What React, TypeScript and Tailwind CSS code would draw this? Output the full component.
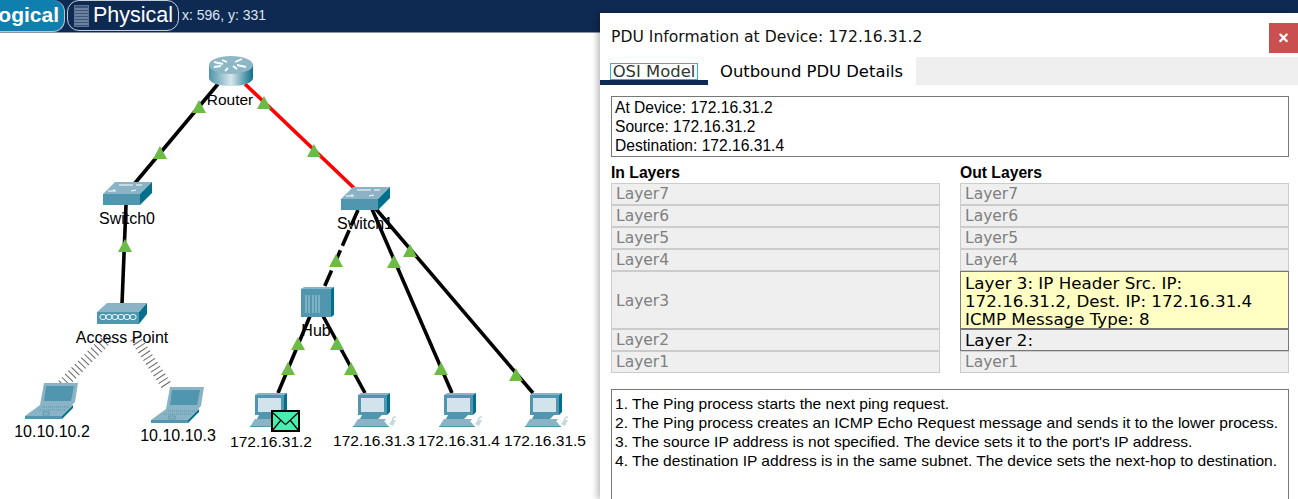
const ARIAL = "font-['Liberation_Sans',Arial,sans-serif]";
const TAHOMA = "font-['DejaVu_Sans',Verdana,sans-serif]";

function Defs() {
  return (
    <defs>
      <linearGradient id="routerSide" x1="0" x2="1" y1="0" y2="0">
        <stop offset="0" stopColor="#4d93a9" />
        <stop offset="0.5" stopColor="#d7e6ec" />
        <stop offset="1" stopColor="#0f6f88" />
      </linearGradient>
    </defs>
  );
}

function Router() {
  return (
    <g>
      <path d="M209 64v14c0 5 10 8 22 8s22-3 22-8V64z" fill="url(#routerSide)" />
      <ellipse cx="231" cy="65" rx="22" ry="9" fill="#8db6c6" />
      <path d="M214 62l9 2M214 67l7-1M242 59l-7 3M225 71l3-3M233 66l4 3M237 65l9 2M222 60l5 2" stroke="#fff" strokeWidth="1.8" fill="none" />
    </g>
  );
}

// x,y = top left of the front face
function Switch({ x, y }: { x: number; y: number }) {
  return (
    <g transform={`translate(${x} ${y})`}>
      <path d="M0 0L12-12H49L37 0z" fill="#8ab4c5" />
      <path d="M0 0H37V11H0z" fill="#5096ae" />
      <path d="M37 0L49-12V-1L37 11z" fill="#02708c" />
      <path d="M16-9h14M33-9l6 0M12-4h-2M5-3l8 0M28-3l5-1" stroke="#fff" strokeWidth="1" fill="none" />
    </g>
  );
}

function AccessPoint() {
  return (
    <g>
      <path d="M97 312L107 303H147L139 312z" fill="#8ab4c5" />
      <path d="M97 312H139V324H97z" fill="#5096ae" />
      <path d="M139 312L147 303V314L139 324z" fill="#02708c" />
      {[102, 108, 114, 120, 126, 132].map((cx) => (
        <ellipse key={cx} cx={cx + 1} cy="317" rx="3.2" ry="2.6" fill="none" stroke="#fff" strokeWidth="0.9" />
      ))}
    </g>
  );
}

function Hub() {
  return (
    <g>
      <path d="M301 289L304 287H334L331 289z" fill="#8ab4c5" />
      <path d="M301 289H331V317H301z" fill="#5096ae" />
      <path d="M331 289L334 287V315L331 317z" fill="#02708c" />
      <path d="M306 295V313M309 295V313M313 295V313M316 295V313M319 295V313" stroke="#a9cbd8" strokeWidth="1" />
    </g>
  );
}

function Laptop({ dx, dy }: { dx: number; dy: number }) {
  return (
    <g transform={`translate(${dx} ${dy})`}>
      <path d="M44 383H78L75 402L72 405H40z" fill="#8ab4c5" />
      <path d="M46 386H74L71 401H44z" fill="#5096ae" />
      <path d="M40 405H73L62 416H25z" fill="#8ab4c5" />
      <path d="M25 416H62V419H25z" fill="#5096ae" />
      <path d="M62 416L73 405V408L62 419z" fill="#02708c" />
      <path d="M42 407H70M38 410H66" stroke="#5096ae" strokeWidth="1" strokeDasharray="1 1" />
      <rect x="43" y="412" width="6" height="3" fill="none" stroke="#5096ae" strokeWidth="0.8" />
    </g>
  );
}

function Pc({ dx }: { dx: number }) {
  return (
    <g transform={`translate(${dx} 0)`}>
      <path d="M358 395L361 393H390L387 395z" fill="#8ab4c5" />
      <path d="M358 395H387V415H358z" fill="#5096ae" />
      <path d="M387 395L390 393V412L387 415z" fill="#02708c" />
      <rect x="361" y="398" width="23" height="14" fill="#d3e3ec" />
      <path d="M362 415H382L378 419H360z" fill="#5096ae" />
      <path d="M358 419H386L384 422H356z" fill="#8ab4c5" />
      <path d="M356 422H385L389 427H353z" fill="#8ab4c5" />
      <path d="M353 426H389V427H353z" fill="#5096ae" />
      <path d="M389 424L392 420H396L393 426z" fill="#c6d9e1" />
      <path d="M392 420Q393 416 396 417" fill="none" stroke="#8ab4c5" strokeWidth="0.8" />
    </g>
  );
}

function Arrow({ x, y }: { x: number; y: number }) {
  return <path d={`M${x} ${y - 7}L${x + 7} ${y + 6}H${x - 7}z`} fill="#6cbb45" />;
}

const arrows = [
  [199, 107], [160, 153], [264, 103], [314, 151], [125, 246], [336, 261],
  [298, 344], [288, 369], [337, 344], [351, 369], [394, 262], [410, 251],
  [441, 369], [516, 375],
];

const labels = [
  { text: 'Router', x: 230, y: 100, size: 'text-[15.5px]' },
  { text: 'Switch0', x: 127, y: 219, size: 'text-[16px]' },
  { text: 'Switch1', x: 365, y: 224, size: 'text-[16px]' },
  { text: 'Access Point', x: 122, y: 338, size: 'text-[16px]' },
  { text: 'Hub', x: 316, y: 331, size: 'text-[16px]' },
  { text: '10.10.10.2', x: 52, y: 432, size: 'text-[16px]' },
  { text: '10.10.10.3', x: 178, y: 436, size: 'text-[16px]' },
  { text: '172.16.31.2', x: 271, y: 442, size: 'text-[15.5px]' },
  { text: '172.16.31.3', x: 374, y: 441, size: 'text-[15.5px]' },
  { text: '172.16.31.4', x: 459, y: 441, size: 'text-[15.5px]' },
  { text: '172.16.31.5', x: 545, y: 441, size: 'text-[15.5px]' },
];

function Topology() {
  return (
    <div className="relative w-full h-full bg-white">
      <svg className="absolute left-0 top-[-33px]" width="600" height="499" viewBox="0 0 600 499">
        <Defs />
        <g stroke="#000" strokeWidth="3.6" fill="none">
          <path d="M218 84L125 195" />
          <path d="M126 205L122 304" />
          <path d="M310 316L278 393" />
          <path d="M323 316L365 393" />
          <path d="M372 209L452 393" />
          <path d="M376 209L533 393" />
          <path d="M358 210L323 290" strokeDasharray="17 5" />
        </g>
        <path d="M245 84L355 189" stroke="#f00" strokeWidth="3.6" />
        <g stroke="#666" strokeWidth="11" strokeDasharray="1 3.6" fill="none">
          <path d="M108 338L62 385" />
          <path d="M135 338L168 388" />
        </g>
        <Router />
        <Switch x={103} y={194} />
        <Switch x={341} y={199} />
        <AccessPoint />
        <Hub />
        <Laptop dx={0} dy={0} />
        <Laptop dx={126} dy={4} />
        <Pc dx={-103} />
        <Pc dx={0} />
        <Pc dx={86} />
        <Pc dx={172} />
        {arrows.map(([x, y]) => (
          <Arrow key={`${x}-${y}`} x={x} y={y} />
        ))}
        {/* envelope on the pdu */}
        <rect x="272" y="411" width="27" height="20" fill="#45f0b0" stroke="#000" strokeWidth="2" />
        <path d="M272 412L285 424Q285.500 425 286 424L299 412M272 431L281 420M299 431L290 420" fill="none" stroke="#000" strokeWidth="1.2" />
      </svg>
      {labels.map((l) => (
        <span
          key={l.text}
          className={`absolute -translate-x-1/2 -translate-y-1/2 leading-none whitespace-nowrap text-black ${l.size} ${ARIAL}`}
          style={{ left: l.x, top: l.y - 33 }}
        >
          {l.text}
        </span>
      ))}
    </div>
  );
}

function LayerBox({ label }: { label: string }) {
  return (
    <div className="h-[22px] bg-[#efefef] border border-[#cccccc] px-[4px] text-[15.5px] leading-[21px] text-[#808080]">
      {label}
    </div>
  );
}

function InLayers() {
  return (
    <div className="flex flex-col">
      <div className={`h-[26px] text-[15.7px] font-bold leading-[31px] text-black ${ARIAL}`}>In Layers</div>
      <div className={TAHOMA}>
        <LayerBox label="Layer7" />
        <LayerBox label="Layer6" />
        <LayerBox label="Layer5" />
        <LayerBox label="Layer4" />
        <div className="flex h-[58px] items-center bg-[#efefef] border border-[#cccccc] px-[4px] pt-[4px] text-[15.5px] text-[#808080]">Layer3</div>
        <LayerBox label="Layer2" />
        <LayerBox label="Layer1" />
      </div>
    </div>
  );
}

function OutLayers() {
  return (
    <div className="flex flex-col">
      <div className={`h-[26px] text-[15.7px] font-bold leading-[31px] text-black ${ARIAL}`}>Out Layers</div>
      <div className={TAHOMA}>
        <LayerBox label="Layer7" />
        <LayerBox label="Layer6" />
        <LayerBox label="Layer5" />
        <LayerBox label="Layer4" />
        <div className="h-[58px] overflow-hidden whitespace-nowrap bg-[#ffffc4] border border-[#777777] px-[4px] pt-[2px] text-[16.7px] leading-[18px] text-black">
          Layer 3: IP Header Src. IP:
          <br />
          172.16.31.2, Dest. IP: 172.16.31.4
          <br />
          ICMP Message Type: 8
        </div>
        <div className="h-[22px] bg-[#efefef] border border-[#777777] px-[4px] text-[16.7px] leading-[21px] text-black">Layer 2:</div>
        <LayerBox label="Layer1" />
      </div>
    </div>
  );
}

function PduPanel() {
  return (
    <div className="absolute left-[600px] top-[13px] right-0 bottom-0 overflow-hidden bg-white shadow-[-3px_0_6px_rgba(0,0,0,0.25)]">
      <div className="flex h-[44px]">
        <div className={`flex-1 pl-[11px] pt-[13px] text-[15.6px] leading-[22px] text-[#111] ${TAHOMA}`}>PDU Information at Device: 172.16.31.2</div>
        <button className={`mt-[10px] h-[30px] w-[29px] bg-[#c9504f] text-[18px] font-bold leading-none text-white ${ARIAL}`}>×</button>
      </div>
      <div className={`flex h-[28px] text-[16.4px] text-black ${TAHOMA}`}>
        <div className="w-[108px] h-full border-b-[5px] border-[#0f2a52] pl-[10px] pt-[6px]">
          <span className="block w-[88px] h-[17px] border border-[#2bb4dc] text-center leading-[16px] text-[#333]">OSI Model</span>
        </div>
        <div className="w-[208px] pl-[12px] pt-[6px] leading-[18px]">Outbound PDU Details</div>
        <div className="flex-1 bg-[#efefef]" />
      </div>
      <div className={`ml-[11px] mr-[9px] mt-[11px] h-[61px] border border-[#777777] px-[3px] py-[1px] text-[15.6px] leading-[19px] text-black ${ARIAL}`}>
        At Device: 172.16.31.2
        <br />
        Source: 172.16.31.2
        <br />
        Destination: 172.16.31.4
      </div>
      <div className="ml-[11px] mr-[9px] grid grid-cols-2 gap-[20px]">
        <InLayers />
        <OutLayers />
      </div>
      <div className={`ml-[11px] mr-[9px] mt-[16px] h-[140px] border border-[#777777] px-[3px] pt-[4px] text-[15.55px] leading-[19px] whitespace-nowrap text-black ${ARIAL}`}>
        <div>1. The Ping process starts the next ping request.</div>
        <div>2. The Ping process creates an ICMP Echo Request message and sends it to the lower process.</div>
        <div>3. The source IP address is not specified. The device sets it to the port's IP address.</div>
        <div>4. The destination IP address is in the same subnet. The device sets the next-hop to destination.</div>
      </div>
    </div>
  );
}

function TopBar() {
  return (
    <div className={`flex h-[33px] items-start overflow-hidden border-b border-[#8a97a8] bg-[#0f2a52] text-white ${ARIAL}`}>
      <div className="ml-[-30px] h-[32px] w-[95px] shrink-0 rounded-r-[12px] border-r border-b border-[#b9c6d4] bg-[#0e7fae] pr-[5px] text-right text-[21px] font-bold leading-[29px]">
        ogical
      </div>
      <div className="ml-[2px] flex h-[31px] w-[112px] shrink-0 items-center rounded-[12px] border border-[#c5ced9] pl-[6px] text-[21.5px] leading-none">
        <svg width="15" height="22" viewBox="0 0 15 22" className="mr-[4px]">
          <rect x="0.5" y="0.5" width="14" height="21" fill="#3b5478" stroke="#5d7392" />
          <path d="M1 4h13M1 7h13M1 10h13M1 13h13M1 16h13M1 19h13" stroke="#9fb0c4" strokeWidth="1" />
        </svg>
        Physical
      </div>
      <div className="ml-[3px] pt-[6px] text-[14px] leading-[18px] text-[#dfe6ee]">x: 596, y: 331</div>
    </div>
  );
}

export default function App() {
  return (
    <div className="relative flex h-[499px] w-[1298px] flex-col overflow-hidden bg-white">
      <TopBar />
      <div className="flex-1">
        <Topology />
      </div>
      <PduPanel />
    </div>
  );
}
